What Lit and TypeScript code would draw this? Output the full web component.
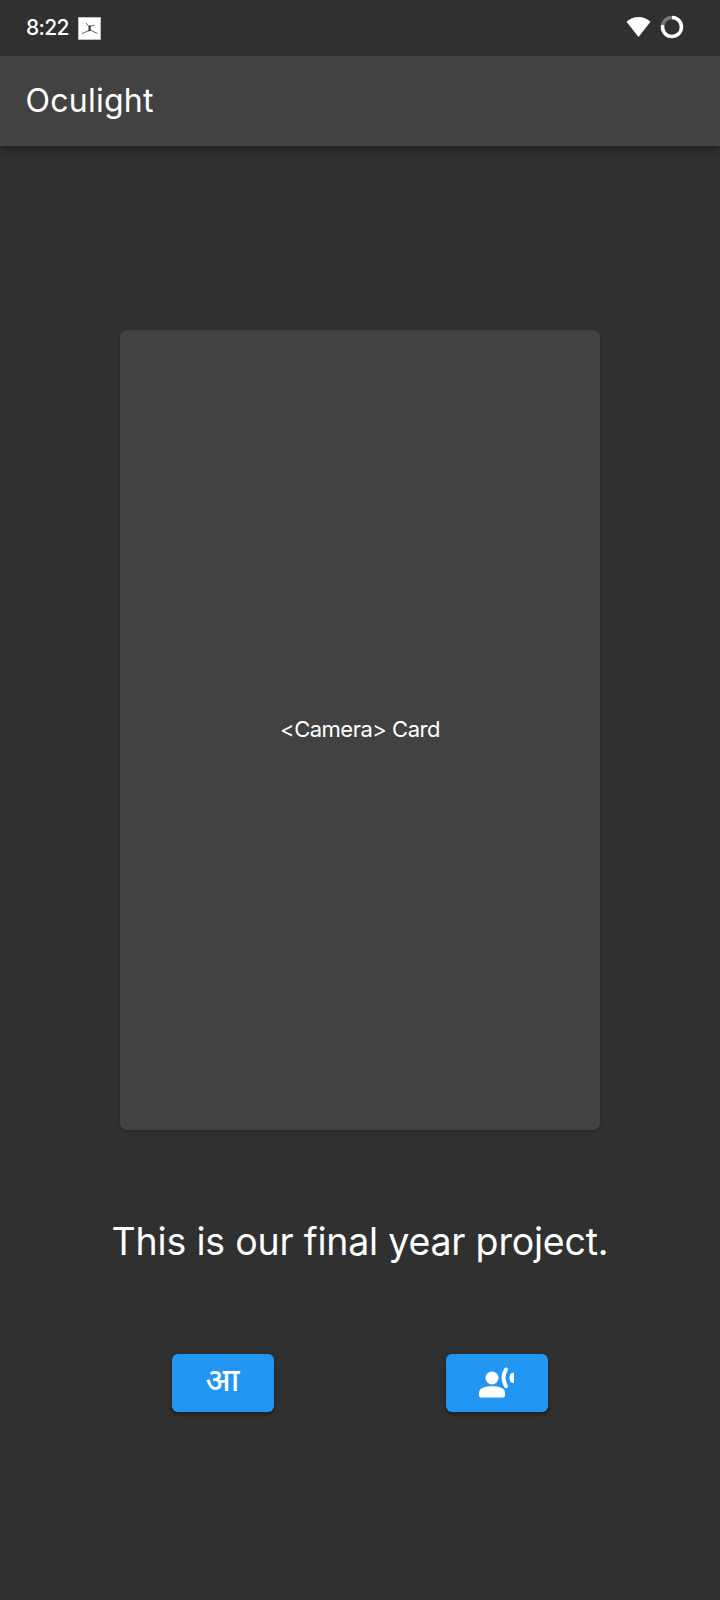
import { LitElement, html, css } from "lit";
import { customElement } from "lit/decorators.js";

@customElement("app-root")
export class AppRoot extends LitElement {
  static styles = css`
    :host {
      display: flex;
      flex-direction: column;
      height: 1600px;
      background: #303030;
      color: #fff;
      font-family: Inter, "Noto Sans", sans-serif;
      overflow: hidden;
    }
    svg { display: block; }
    .status {
      display: flex;
      align-items: center;
      position: relative;
      z-index: 1;
      height: 56px;
      box-sizing: border-box;
      padding: 0 36px 0 26px;
      background: #303030;
    }
    .time { font-size: 21px; line-height: 56px; font-weight: 500; letter-spacing: -0.7px; width: 52px; white-space: nowrap; }
    .spacer { flex: 1; }
    .wifi { margin: 1px 9px 0 0; }
    .signal { display: flex; padding-bottom: 2px; }
    .bar {
      height: 89.5px;
      box-sizing: border-box;
      padding-left: 25.5px;
      background: #424242;
      font-size: 32px;
      line-height: 90px;
      letter-spacing: 0.25px;
      box-shadow: 0 4px 8px rgba(0, 0, 0, 0.2), 0 2px 10px rgba(0, 0, 0, 0.18);
    }
    .body { display: flex; flex-direction: column; align-items: center; }
    .card {
      display: flex;
      align-items: center;
      justify-content: center;
      width: 480px;
      height: 800px;
      box-sizing: border-box;
      padding-bottom: 2px;
      margin-top: 184.5px;
      border-radius: 7px;
      background: #424242;
      box-shadow: 0 2px 2px rgba(0, 0, 0, 0.12), 0 0 2px rgba(0, 0, 0, 0.12);
      font-size: 22px;
      line-height: 26px;
      letter-spacing: -0.5px;
      white-space: nowrap;
    }
    .caption { margin-top: 88px; font-size: 37.5px; line-height: 48px; letter-spacing: -0.2px; white-space: nowrap; }
    .actions { display: flex; gap: 171.5px; margin-top: 88px; }
    .btn {
      display: flex;
      align-items: center;
      justify-content: center;
      width: 102.5px;
      height: 58px;
      padding: 0;
      border: 0;
      border-radius: 6px;
      background: #2196f3;
      color: #fff;
      box-shadow: 0 3px 3px rgba(0, 0, 0, 0.22), 0 1px 5px rgba(0, 0, 0, 0.18);
    }
    .letter { font-family: "Noto Sans", "Noto Sans Devanagari", sans-serif; font-size: 32px; line-height: 40px; font-weight: 500; padding: 0 1px 8px 0; }
  `;

  render() {
    return html`
      <div class="status">
        <span class="time">8:22</span>
        <svg width="23" height="23" viewBox="0 0 23 23">
          <rect x=".3" y=".3" width="22.4" height="22.4" fill="#fff" stroke="#bbb" stroke-width=".6" />
          <path d="M8 6l3 3.500M16.500 8l-5 1.500M11 13.500l-7 3M12 13l7.500 3.500" fill="none" stroke="#555" stroke-width=".9" />
          <path d="M10.500 8.800l2.500-.3-.5 2.500.5 2.500-2.500 1z" fill="#333" />
        </svg>
        <span class="spacer"></span>
        <div class="signal">
          <svg class="wifi" width="25" height="22" viewBox="0 0 25 22">
            <path d="M.5 5.800Q5.500 1 12.500 1t12 4.800L12.500 21z" fill="#fff" />
          </svg>
          <svg width="24" height="24" viewBox="0 0 24 24">
            <circle cx="12" cy="12" r="9.500" fill="none" stroke="#777" stroke-width="3.400" />
            <path d="M12 2.500A9.500 9.500 0 1 1 2.700 10" fill="none" stroke="#fff" stroke-width="3.400" />
          </svg>
        </div>
      </div>
      <div class="bar">Oculight</div>
      <div class="body">
        <div class="card">&lt;Camera&gt; Card</div>
        <div class="caption">This is our final year project.</div>
        <div class="actions">
          <button class="btn"><span class="letter">आ</span></button>
          <button class="btn">
            <svg width="36" height="36" viewBox="0 0 36 36">
              <circle cx="13" cy="13" r="6.500" fill="#fff" />
              <path d="M0 30.500v-3C0 23 6.500 21.300 13 21.300S26 23 26 27.500v3q0 2-2 2H2q-2 0-2-2z" fill="#fff" />
              <path d="M27 4.500Q22 12.500 27 21.200" fill="none" stroke="#fff" stroke-width="4" stroke-linecap="round" />
              <path d="M35 7.800q-2.500-.5-3.800 1.500-1.500 3.500 0 7 1.300 2 3.800 1.500z" fill="#fff" />
            </svg>
          </button>
        </div>
      </div>
    `;
  }
}
